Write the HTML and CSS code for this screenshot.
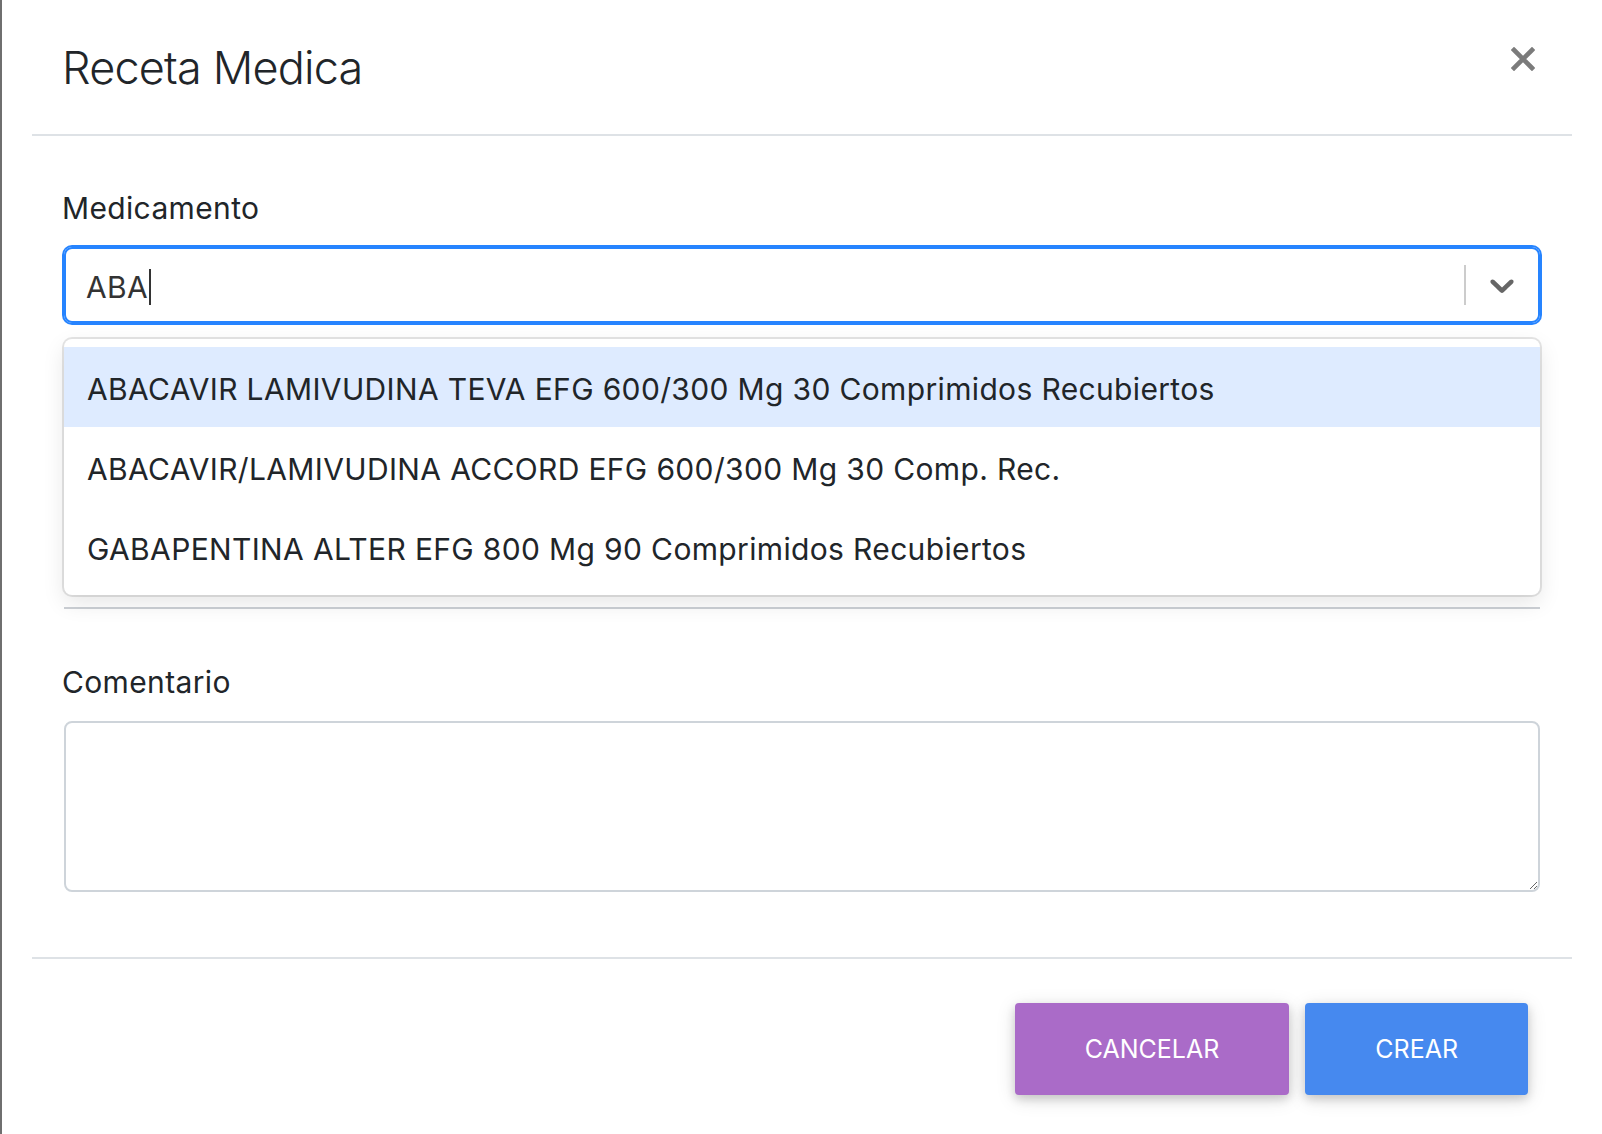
FILE: index.html
```html
<!DOCTYPE html>
<html lang="es">
<head>
<meta charset="utf-8">
<title>Receta Medica</title>
<link rel="stylesheet" href="styles.css">
</head>
<body>
<div class="modal">
  <div class="modal-header">
    <h4 class="modal-title">Receta Medica</h4>
    <button class="close" aria-label="Cerrar">
      <svg width="24" height="24" viewBox="0 0 24 24"><path d="M3 3L21 21M21 3L3 21" stroke="#7b7b7b" stroke-width="4.6" stroke-linecap="square" fill="none"/></svg>
    </button>
  </div>
  <div class="modal-body">
    <div class="form-group">
      <label class="label">Medicamento</label>
      <div class="select">
        <div class="control">
          <div class="value">ABA<span class="caret"></span></div>
          <span class="separator"></span>
          <div class="indicator">
            <svg width="40" height="40" viewBox="0 0 20 20"><path fill="#666" d="M4.516 7.548c0.436-0.446 1.043-0.481 1.576 0l3.908 3.747 3.908-3.747c0.533-0.481 1.141-0.446 1.574 0 0.436 0.445 0.408 1.197 0 1.615-0.406 0.418-4.695 4.502-4.695 4.502-0.217 0.223-0.502 0.335-0.787 0.335s-0.57-0.112-0.789-0.335c0 0-4.287-4.084-4.695-4.502s-0.436-1.17 0-1.615z"/></svg>
          </div>
        </div>
        <div class="menu">
          <div class="option focused">ABACAVIR LAMIVUDINA TEVA EFG 600/300 Mg 30 Comprimidos Recubiertos</div>
          <div class="option">ABACAVIR/LAMIVUDINA ACCORD EFG 600/300 Mg 30 Comp. Rec.</div>
          <div class="option">GABAPENTINA ALTER EFG 800 Mg 90 Comprimidos Recubiertos</div>
        </div>
      </div>
    </div>
    <div class="underline"></div>
    <div class="form-group">
      <label class="label">Comentario</label>
      <textarea class="textarea"></textarea>
    </div>
  </div>
  <div class="modal-footer">
    <button class="btn btn-cancel">Cancelar</button>
    <button class="btn btn-create">Crear</button>
  </div>
</div>
</body>
</html>
```
FILE: styles.css
```css
html, body {
  margin: 0;
  padding: 0;
}
body {
  background: #fff;
  border-left: 2px solid #6f6f6f;
  min-height: 1134px;
  box-sizing: border-box;
  font-family: Inter, "Noto Sans", sans-serif;
  color: #212529;
}
.modal {
  margin-left: 30px;
  width: 1540px;
}
.modal-header {
  display: flex;
  justify-content: space-between;
  align-items: flex-start;
  padding: 40px 32px 39px 32px;
  border-bottom: 2px solid #dee2e6;
}
.modal-title {
  margin: 0;
  font-size: 45px;
  font-weight: 300;
  line-height: 55px;
  letter-spacing: -0.8px;
  text-indent: -2px;
}
.close {
  background: none;
  border: 0;
  padding: 0;
  margin: 7px 5px 0 0;
  width: 24px;
  height: 24px;
  line-height: 0;
}
.modal-body {
  padding: 50px 32px 65px 32px;
}
.label {
  display: block;
  font-size: 30px;
  line-height: 45px;
  margin-bottom: 16px;
  letter-spacing: 0.35px;
  text-indent: -2px;
}
.select {
  position: relative;
}
.control {
  height: 76px;
  box-sizing: border-box;
  border: 2px solid #2684ff;
  box-shadow: 0 0 0 2px #2684ff;
  border-radius: 8px;
  display: flex;
  align-items: center;
}
.value {
  flex: 1;
  padding: 4px 0 0 20px;
  font-size: 30px;
  letter-spacing: 0.35px;
  color: #333;
  display: flex;
  align-items: center;
}
.caret {
  display: inline-block;
  width: 2px;
  height: 36px;
  background: #333;
  margin-left: 1px;
}
.separator {
  width: 2px;
  height: 40px;
  background: #ccc;
}
.indicator {
  padding: 0 16px;
  height: 40px;
  line-height: 0;
}
.menu {
  position: absolute;
  top: calc(100% + 16px);
  left: 0;
  right: 0;
  background: #fff;
  border-radius: 8px;
  box-shadow: 0 0 0 2px rgba(0, 0, 0, 0.1), 0 8px 22px rgba(0, 0, 0, 0.1);
  padding: 8px 0;
  z-index: 2;
}
.option {
  height: 80px;
  box-sizing: border-box;
  display: flex;
  align-items: center;
  padding: 4px 24px 0 23px;
  font-size: 30px;
  letter-spacing: 0.35px;
  color: #212529;
}
.option.focused {
  background: #deebff;
}
.underline {
  height: 0;
  margin: 284px 0 51px 0;
  border-bottom: 2px solid #ccd0d5;
}
.textarea {
  display: block;
  width: 100%;
  height: 171px;
  box-sizing: border-box;
  border: 2px solid #ced4da;
  border-radius: 8px;
  font-family: inherit;
  font-size: 30px;
  padding: 12px 20px;
}
.modal-footer {
  display: flex;
  justify-content: flex-end;
  gap: 16px;
  padding: 44px 44px 0 0;
  border-top: 2px solid #dee2e6;
}
.btn {
  height: 92px;
  padding: 0 70px;
  border: 0;
  border-radius: 4px;
  color: #fff;
  font-family: inherit;
  font-size: 25px;
  font-weight: 400;
  text-transform: uppercase;
  box-shadow: 0 4px 10px rgba(0, 0, 0, 0.16), 0 4px 20px rgba(0, 0, 0, 0.12);
}
.btn-cancel {
  background: #aa6bc8;
}
.btn-create {
  background: #4689ef;
}
```
